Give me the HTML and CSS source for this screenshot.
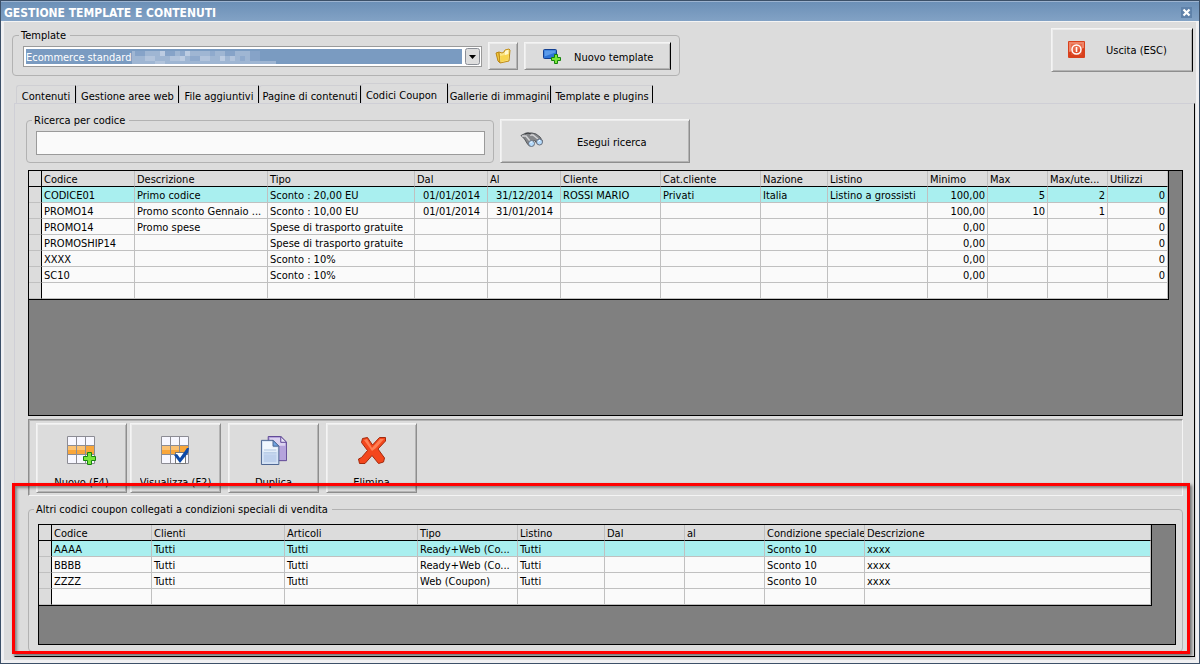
FILE: index.html
```html
<!DOCTYPE html>
<html lang="it">
<head>
<meta charset="utf-8">
<title>Gestione template e contenuti</title>
<link rel="stylesheet" href="styles.css">
</head>
<body>
<div class="window">
  <div class="titlebar">
    <h1>GESTIONE TEMPLATE E CONTENUTI</h1>
    <button class="close" type="button" aria-label="Chiudi">
      <svg viewBox="0 0 11 11"><path d="M2.5 2.5l6 6M8.5 2.5l-6 6" stroke="#fff" stroke-width="2.2"/></svg>
    </button>
  </div>

  <div class="client">
    <div class="top">
      <fieldset class="template">
        <legend><label for="template">Template</label></legend>
        <div class="combo">
          <select id="template"><option>Ecommerce standard</option></select>
          <svg class="drop" viewBox="0 0 15 17"><rect x=".5" y=".5" width="14" height="16" rx="2" fill="#dedede" stroke="#8a8e96"/><path d="M4 7h7l-3.500 4z" fill="#000"/></svg>
          <!-- masked shop name -->
          <svg class="mask" viewBox="0 0 145 13" shape-rendering="crispEdges">
            <path d="M0 0h128v10h16v3H0z" fill="#9fb6d3"/>
            <path d="M3 0h10v5H3zM33 0h10v5H33zM53 0h5v5h-5zM93 0h10v5H93zM118 0h10v10h-10z" fill="#86a3c8"/>
            <path d="M13 5h10v5H13zM38 5h10v5H38zM68 5h10v5H68zM98 5h5v5h-5zM23 10h10v3H23z" fill="#b2c4dc"/>
            <path d="M28 0h5v5h-5zM53 0h5v5h-5zM48 5h5v5h-5zM88 5h5v5h-5z" fill="#bccce2"/>
            <path d="M48 0h5v5h-5zM58 5h10v5H58zM78 0h5v5h-5zM108 5h5v5h-5z" fill="#8faacd"/>
          </svg>
        </div>
        <button class="btn folder" type="button" aria-label="Apri cartella">
          <svg viewBox="0 0 16 16"><path d="M1 5l3 -1 1 11 -2 -2z" fill="#f0c63c" stroke="#b98512"/><path d="M4 4l3 1 2-1 1-2 4-1 1 1-1 11-9 2z" fill="#fbe68a" stroke="#c08c16"/><path d="M5 8l9-2-1 6-7 2z" fill="#f8d550"/><path d="M10 3l3-1v4l-3 1z" fill="#fff8cf"/></svg>
        </button>
        <button class="btn dark new-template" type="button">
          <svg viewBox="0 0 18 16"><rect x=".5" y="1.500" width="13" height="9" rx="1" fill="#2d74d6" stroke="#123f91"/><path d="M1.500 2.500h11v2l-11 4z" fill="#5b9bea"/><path d="M11.500 6.500h3v3h3v3h-3v3h-3v-3h-3v-3h3z" fill="#7be53a" stroke="#16840f"/></svg>
          <span>Nuovo template</span>
        </button>
      </fieldset>

      <button class="btn dark exit" type="button">
        <svg viewBox="0 0 17 17"><rect width="17" height="17" rx="1" fill="#d8401c"/><path d="M1 1h15v6L1 11z" fill="#ee8568"/><rect x="3" y="3" width="11" height="11" fill="#e65a37" opacity=".6"/><circle cx="8.500" cy="8.500" r="4.500" fill="none" stroke="#fff" stroke-width="1.500"/><path d="M8.500 6v5" stroke="#fff" stroke-width="1.600"/></svg>
        <span>Uscita (ESC)</span>
      </button>
    </div>

    <div class="tabs" role="tablist">
      <button type="button" role="tab">Contenuti</button>
      <button type="button" role="tab">Gestione aree web</button>
      <button type="button" role="tab">File aggiuntivi</button>
      <button type="button" role="tab">Pagine di contenuti</button>
      <button type="button" role="tab" aria-selected="true">Codici Coupon</button>
      <button type="button" role="tab">Gallerie di immagini</button>
      <button type="button" role="tab">Template e plugins</button>
    </div>

    <div class="panel" role="tabpanel">
      <div class="search">
        <fieldset>
          <legend><label for="codice">Ricerca per codice</label></legend>
          <input id="codice" type="text">
        </fieldset>
        <button class="btn run-search" type="button">
          <svg viewBox="0 0 24 24"><path d="M1 6.500l5-2.500h6l4 1 4 3 2.500 4-3 3-3-1-2-3-1 1-1 4-3 1-2-2-3-5z" fill="#85878a" stroke="#54575b"/><path d="M2 7l4 0 4 5M10 6l3 0 5 4" stroke="#d3d4d6" fill="none" stroke-width="1.500"/><path d="M5 5l3-1 3 1" stroke="#3c3e41" fill="none"/><circle cx="11.500" cy="14.500" r="3" fill="#b5dafb" stroke="#666e7c"/><circle cx="19.500" cy="13" r="3" fill="#b5dafb" stroke="#666e7c"/><path d="M10.500 14l1.500-1.500M18.500 12.500l1.500-1.500" stroke="#fff"/></svg>
          <span>Esegui ricerca</span>
        </button>
      </div>

      <div class="grid">
        <table class="coupons">
          <thead>
            <tr><th></th><th>Codice</th><th>Descrizione</th><th>Tipo</th><th>Dal</th><th>Al</th><th>Cliente</th><th>Cat.cliente</th><th>Nazione</th><th>Listino</th><th>Minimo</th><th>Max</th><th>Max/ute...</th><th>Utilizzi</th></tr>
          </thead>
          <tbody>
            <tr class="current"><td></td><td>CODICE01</td><td>Primo codice</td><td>Sconto : 20,00 EU</td><td>01/01/2014</td><td>31/12/2014</td><td>ROSSI MARIO</td><td>Privati</td><td>Italia</td><td>Listino a grossisti</td><td>100,00</td><td>5</td><td>2</td><td>0</td></tr>
            <tr><td></td><td>PROMO14</td><td>Promo sconto Gennaio ...</td><td>Sconto : 10,00 EU</td><td>01/01/2014</td><td>31/01/2014</td><td></td><td></td><td></td><td></td><td>100,00</td><td>10</td><td>1</td><td>0</td></tr>
            <tr><td></td><td>PROMO14</td><td>Promo spese</td><td>Spese di trasporto gratuite</td><td></td><td></td><td></td><td></td><td></td><td></td><td>0,00</td><td></td><td></td><td>0</td></tr>
            <tr><td></td><td>PROMOSHIP14</td><td></td><td>Spese di trasporto gratuite</td><td></td><td></td><td></td><td></td><td></td><td></td><td>0,00</td><td></td><td></td><td>0</td></tr>
            <tr><td></td><td>XXXX</td><td></td><td>Sconto : 10%</td><td></td><td></td><td></td><td></td><td></td><td></td><td>0,00</td><td></td><td></td><td>0</td></tr>
            <tr><td></td><td>SC10</td><td></td><td>Sconto : 10%</td><td></td><td></td><td></td><td></td><td></td><td></td><td>0,00</td><td></td><td></td><td>0</td></tr>
            <tr><td></td><td></td><td></td><td></td><td></td><td></td><td></td><td></td><td></td><td></td><td></td><td></td><td></td><td></td></tr>
          </tbody>
        </table>
      </div>

      <div class="toolbar">
        <button class="btn tool" type="button">
          <svg viewBox="0 0 29 29"><rect x=".5" y=".5" width="27" height="27" fill="#f7f7ff"/><path d="M1 10h27v9H1z" fill="#f9a63a"/><path d="M1 10h17v4H1z" fill="#fcc272"/><path d="M.5.500h27v27H.5zM9.500.500v27M18.500.500v27M.5 9.500h27M.5 18.500h27" fill="none" stroke="#8c8c94"/><path d="M20.500 16.500h4v4h4v4h-4v4h-4v-4h-4v-4h4z" fill="#7be53a" stroke="#16840f"/></svg>
          <span>Nuovo (F4)</span>
        </button>
        <button class="btn tool" type="button">
          <svg viewBox="0 0 29 29"><rect x=".5" y=".5" width="27" height="27" fill="#f7f7ff"/><path d="M1 10h27v9H1z" fill="#f9a63a"/><path d="M1 10h17v4H1z" fill="#fcc272"/><path d="M.5.500h27v27H.5zM9.500.500v27M18.500.500v27M.5 9.500h27M.5 18.500h27" fill="none" stroke="#8c8c94"/><rect x="14.500" y="16.500" width="10" height="11" fill="#fff" stroke="#777"/><path d="M13 19l3-1 3 4 7-10h2l-1 5-8 10z" fill="#0d49a8"/></svg>
          <span>Visualizza (F2)</span>
        </button>
        <button class="btn tool spaced" type="button">
          <svg viewBox="0 0 28 30"><path d="M8.500.500h13l6 6v19h-19z" fill="#b5a3dc" stroke="#5d4593"/><path d="M10 2h11v5h5v3H10z" fill="#dcd3f0"/><path d="M21.500.500v6h6z" fill="#e9e4f7" stroke="#5d4593"/><path d="M1.500 4.500h12l6 6v19h-18z" fill="#d3e2f5" stroke="#4a628f"/><path d="M3 6h10v6h5v4H3z" fill="#f1f7fe"/><path d="M13.500 4.500v6h6z" fill="#6fa5e6" stroke="#4a628f"/><path d="M4 14.500h13M4 17.500h13" stroke="#a9bfdd"/><path d="M4 19h13v8H4z" fill="#bdd0ec"/></svg>
          <span>Duplica</span>
        </button>
        <button class="btn tool spaced" type="button">
          <svg viewBox="0 0 28 29"><path d="M4.500 2.500l5-1 5 7.500 7-7.500 6 0v3.500l-7.500 8 6.500 9-1 4-5 1.500-6.500-8-7 8-5.500 0-1-4.500 3-1.500 6-7-6-8z" fill="#f4471d" stroke="#a32a0d"/><path d="M6 4l3-1 5 9 8-9 4 0-8 9-4 3z" fill="#ff8055"/></svg>
          <span>Elimina</span>
        </button>
      </div>

      <fieldset class="linked">
        <legend>Altri codici coupon collegati a condizioni speciali di vendita</legend>
        <div class="grid">
          <table class="conditions">
            <thead>
              <tr><th></th><th>Codice</th><th>Clienti</th><th>Articoli</th><th>Tipo</th><th>Listino</th><th>Dal</th><th>al</th><th>Condizione speciale</th><th>Descrizione</th></tr>
            </thead>
            <tbody>
              <tr class="current"><td></td><td>AAAA</td><td>Tutti</td><td>Tutti</td><td>Ready+Web (Co...</td><td>Tutti</td><td></td><td></td><td>Sconto 10</td><td>xxxx</td></tr>
              <tr><td></td><td>BBBB</td><td>Tutti</td><td>Tutti</td><td>Ready+Web (Co...</td><td>Tutti</td><td></td><td></td><td>Sconto 10</td><td>xxxx</td></tr>
              <tr><td></td><td>ZZZZ</td><td>Tutti</td><td>Tutti</td><td>Web (Coupon)</td><td>Tutti</td><td></td><td></td><td>Sconto 10</td><td>xxxx</td></tr>
              <tr><td></td><td></td><td></td><td></td><td></td><td></td><td></td><td></td><td></td><td></td></tr>
            </tbody>
          </table>
        </div>
      </fieldset>
      <div class="highlight"></div>
    </div>
  </div>
</div>
</body>
</html>
```
FILE: styles.css
```css
* { box-sizing: border-box; }

body {
  margin: 0;
  background: #dcdcdc;
  color: #000;
}

body, button, input, select, table {
  font: 11px/14px Tahoma, "DejaVu Sans Condensed", "DejaVu Sans", sans-serif;
}

svg { display: block; flex: none; }

.window {
  display: flex;
  flex-direction: column;
  min-height: 100vh;
  border: 1px solid #3c5068;
}

.titlebar {
  display: flex;
  align-items: center;
  justify-content: space-between;
  height: 21px;
  padding: 2px 7px 0 3px;
  border-top: 1px solid #9db4d0;
  border-bottom: 1px solid #f4f4f4;
  background: linear-gradient(#6c90b7, #82a2c5);
}
.titlebar h1 {
  margin: 0;
  font-size: 12px;
  color: #fff;
}
.close {
  width: 11px;
  height: 11px;
  padding: 0;
  border: 0;
  background: #5f82aa;
}

.client {
  flex: 1;
  display: flex;
  flex-direction: column;
  padding-top: 6px;
  border: solid #f0f0f2;
  border-width: 0 3px 3px;
}

fieldset {
  margin: 0;
  min-width: 0;
  border: 1px solid #b2b2b2;
  border-radius: 4px;
}
legend {
  margin-left: -4px;
  padding: 1px 4px 0 2px;
}

/* raised buttons */
.btn {
  display: flex;
  align-items: center;
  padding: 0;
  color: #000;
  background: #dcdcdc;
  border: 1px solid;
  border-color: #f4f4f4 #8e8e8e #8e8e8e #f4f4f4;
  box-shadow: inset 1px 1px #ececec, inset -1px -1px #b4b4b4;
}
.btn span { padding-top: 3px; }
.btn.dark { border-right-color: #000; }

/* top row */
.top {
  display: flex;
  justify-content: space-between;
  align-items: flex-start;
  padding: 0 3px 0 8px;
}
.template {
  display: flex;
  align-items: center;
  width: 668px;
  height: 48px;
  padding: 0 8px 6px 10px;
}
.combo {
  position: relative;
  flex: 1;
  display: flex;
  gap: 3px;
  height: 21px;
  padding: 1px;
  border: 1px solid #9a9a9a;
  background: #fff;
}
.combo select {
  flex: 1;
  margin: 1px 0 1px 1px;
  padding: 2px 0 0;
  border: 0;
  appearance: none;
  color: #fff;
  background: #7a9bc1;
}
.drop { width: 15px; height: 17px; }
.mask {
  position: absolute;
  left: 108px;
  top: 4px;
  width: 145px;
  height: 13px;
}
.folder {
  justify-content: center;
  width: 30px;
  height: 28px;
  margin: 0 6px;
}
.folder svg { width: 16px; height: 16px; }
.new-template { width: 147px; height: 28px; padding-left: 18px; gap: 13px; }
.new-template svg { width: 18px; height: 16px; }
.exit { width: 142px; height: 44px; padding: 0 0 2px 16px; gap: 21px; }
.exit svg { width: 17px; height: 17px; }

/* tabs */
.tabs {
  display: grid;
  grid-template-columns: 60px 103px 80px 102px 87px 103px 102px;
  align-items: end;
  height: 21px;
  margin: 7px 0 -1px 12px;
}
.tabs button {
  height: 18px;
  margin-bottom: 1px;
  padding: 4px 0 0;
  border: 1px solid #cfcfd3;
  border-right-color: #000;
  border-bottom: 0;
  border-radius: 3px 1px 0 0;
  background: #dcdcdc;
  white-space: nowrap;
}
.tabs [aria-selected] {
  position: relative;
  height: 21px;
  margin: 0;
  padding: 3px 6px 0 0;
}

.panel {
  position: relative;
  flex: 1;
  display: flex;
  flex-direction: column;
  margin: 0 1px 3px 10px;
  padding: 9px 11px 4px 13px;
  border: 1px solid #cfcfd6;
  border-right-color: #000;
  border-bottom-color: #000;
}

.search {
  display: flex;
  align-items: flex-end;
  gap: 6px;
  margin: 0 0 7px -2px;
}
.search fieldset {
  width: 468px;
  height: 50px;
  padding: 3px 8px 0 9px;
}
.search input {
  display: block;
  width: 100%;
  height: 24px;
  padding: 0 3px;
  border: 1px solid #9a9a9a;
  background: #fafafa;
}
.run-search { width: 190px; height: 44px; padding-left: 19px; gap: 33px; }
.run-search svg { width: 24px; height: 24px; }

/* data grids */
.grid {
  flex: 1;
  border: 1px solid #000;
  background: #808080;
  overflow: hidden;
}
.grid table {
  table-layout: fixed;
  border-spacing: 0;
  border-right: 1px solid #000;
  border-bottom: 1px solid #000;
}
.grid th, .grid td {
  height: 16px;
  padding: 2px 2px 0;
  border-right: 1px solid #c0c0c0;
  border-bottom: 1px solid #c0c0c0;
  text-align: left;
  font-weight: normal;
  line-height: 13px;
  white-space: nowrap;
  overflow: hidden;
}
.grid th { background: #dcdcdc; border-bottom-color: #000; }
.grid td { background: #fafafa; }
.grid .current td { background: #a9efef; }
.grid tr > :first-child,
.grid .current td:first-child {
  width: 13px;
  background: #dcdcdc;
  border-right-color: #000;
}

.coupons { width: 1140px; }
.coupons th:nth-child(2) { width: 93px; }
.coupons th:nth-child(3) { width: 133px; }
.coupons th:nth-child(4) { width: 147px; }
.coupons th:nth-child(5), .coupons th:nth-child(6) { width: 73px; }
.coupons th:nth-child(7), .coupons th:nth-child(8) { width: 100px; }
.coupons th:nth-child(9) { width: 67px; }
.coupons th:nth-child(10) { width: 100px; }
.coupons th:nth-child(n+11) { width: 60px; }
.coupons td:nth-child(5), .coupons td:nth-child(6) { padding-right: 7px; text-align: right; }
.coupons td:nth-child(n+11) { text-align: right; }

.conditions { width: 1113px; }
.conditions th:nth-child(2) { width: 100px; }
.conditions th:nth-child(3), .conditions th:nth-child(4) { width: 133px; }
.conditions th:nth-child(5) { width: 100px; }
.conditions th:nth-child(6) { width: 87px; }
.conditions th:nth-child(7), .conditions th:nth-child(8) { width: 80px; }
.conditions th:nth-child(9) { width: 100px; padding-right: 0; }

.toolbar {
  display: flex;
  gap: 3px;
  height: 77px;
  margin-top: 3px;
  padding: 3px 7px 2px;
  border: 1px solid;
  border-color: #8e8e8e #f4f4f4 #f4f4f4 #8e8e8e;
  box-shadow: inset 1px 1px #b4b4b4;
}
.tool {
  flex-direction: column;
  justify-content: space-between;
  width: 91px;
  height: 70px;
  padding: 12px 0 4px;
}
.tool.spaced { margin-left: 4px; }
.tool svg { height: 29px; }
/* the label runs into the lower edge of the button */
.tool span { height: 12px; padding: 0; overflow: hidden; }

.linked {
  height: 150px;
  margin-top: 6px;
  padding: 7px 6px 0 9px;
}
.linked .grid { height: 121px; }

/* red frame drawn over the linked coupons */
.highlight {
  position: absolute;
  left: -3px;
  right: 4px;
  bottom: 2px;
  height: 171px;
  border: 3px solid #f00;
  box-shadow: 2px 2px 3px rgba(0, 0, 0, .5), inset 2px 2px 3px rgba(0, 0, 0, .4);
  pointer-events: none;
}
```
